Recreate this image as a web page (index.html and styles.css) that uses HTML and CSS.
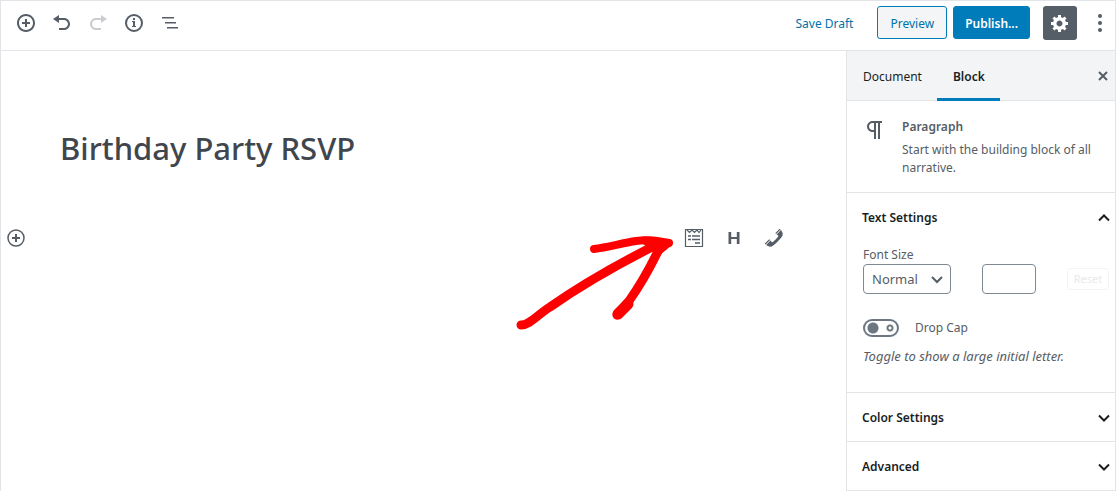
FILE: index.html
```html
<!DOCTYPE html>
<html lang="en">
<head>
    <meta charset="UTF-8">
    <meta name="viewport" content="width=device-width, initial-scale=1.0">
    <title>Edit Page</title>
    <link rel="stylesheet" href="styles.css">
</head>
<body>
    <header class="toolbar">
        <div class="toolbar-left">
            <button class="icon-btn" aria-label="Add block">
                <svg width="20" height="20" viewBox="0 0 20 20"><path d="M10 1c-5 0-9 4-9 9s4 9 9 9 9-4 9-9-4-9-9-9zm0 16c-3.900 0-7-3.100-7-7s3.100-7 7-7 7 3.100 7 7-3.100 7-7 7zm1-11H9v3H6v2h3v3h2v-3h3V9h-3V6z"/></svg>
            </button>
            <button class="icon-btn" aria-label="Undo">
                <svg width="20" height="20" viewBox="0 0 20 20"><path d="M12 5H7V2L1 6l6 4V7h5c2.200 0 4 1.800 4 4s-1.800 4-4 4H7v2h5c3.300 0 6-2.700 6-6s-2.700-6-6-6z"/></svg>
            </button>
            <button class="icon-btn" aria-label="Redo" disabled>
                <svg width="20" height="20" viewBox="0 0 20 20"><path d="M8 5h5V2l6 4-6 4V7H8c-2.200 0-4 1.800-4 4s1.800 4 4 4h5v2H8c-3.300 0-6-2.700-6-6s2.700-6 6-6z"/></svg>
            </button>
            <button class="icon-btn" aria-label="Content structure">
                <svg width="20" height="20" viewBox="0 0 20 20"><circle class="line" cx="10" cy="10" r="8" stroke-width="2"/><path d="M9 5h2v2H9zM8 8h3v5h1v1H8v-1h1V9H8z"/></svg>
            </button>
            <button class="icon-btn" aria-label="Block navigation">
                <svg width="20" height="20" viewBox="0 0 20 20"><path d="M2 4h12v1.500H2zM5 9h11v1.500H5zM7 14h11v1.500H7z"/></svg>
            </button>
        </div>
        <div class="toolbar-right">
            <button class="save-draft">Save Draft</button>
            <button class="btn btn-preview">Preview</button>
            <button class="btn btn-publish">Publish...</button>
            <button class="btn-settings" aria-label="Settings">
                <svg width="20" height="20" viewBox="0 0 20 20"><path d="M18 12h-2.180c-.17.7-.44 1.350-.81 1.930l1.540 1.540-2.100 2.100-1.540-1.540c-.58.36-1.230.63-1.910.79V19H8v-2.180c-.68-.16-1.330-.43-1.910-.79l-1.540 1.540-2.120-2.120 1.540-1.540c-.36-.58-.63-1.230-.79-1.910H1V9.030h2.170c.16-.7.44-1.350.8-1.940L2.430 5.550l2.100-2.100 1.540 1.540c.58-.37 1.240-.64 1.930-.81V2h3v2.180c.68.16 1.330.43 1.910.79l1.540-1.540 2.120 2.120-1.540 1.540c.36.59.64 1.240.8 1.940H18V12zm-8.500 1.500c1.660 0 3-1.340 3-3s-1.340-3-3-3-3 1.340-3 3 1.340 3 3 3z"/></svg>
            </button>
            <button class="btn-more" aria-label="More tools">
                <svg width="20" height="20" viewBox="0 0 20 20"><circle cx="10" cy="3" r="2"/><circle cx="10" cy="10" r="2"/><circle cx="10" cy="17" r="2"/></svg>
            </button>
        </div>
    </header>

    <div class="layout">
        <!-- Editor canvas -->
        <main class="editor">
            <input type="text" class="post-title" aria-label="Title" value="Birthday Party RSVP">
            <div class="block-row">
                <button class="inserter" aria-label="Add block">
                    <svg width="20" height="20" viewBox="0 0 20 20"><circle class="line" cx="10" cy="10" r="8" stroke-width="1.500"/><path d="M9 6h2v3h3v2h-3v3H9v-3H6V9h3z"/></svg>
                </button>
                <div class="quick-blocks">
                    <button class="quick-btn" aria-label="Form">
                        <svg class="line" width="20" height="20" viewBox="0 0 20 20"><path d="M1.500 1.500h17v17h-17z" stroke-width="1.200"/><path d="M3 2l2.500 2.500L8 2l2.500 2.500L13 2l2 2.500L17 2" stroke-width="1.200"/><path d="M4 8h3M8 8h8M4 11.500h3M8 11.500h8M11 15h5" stroke-width="1.400"/></svg>
                    </button>
                    <button class="quick-btn" aria-label="Heading">
                        <svg width="20" height="20" viewBox="0 0 20 20"><path d="M4.500 4h2.700v5h5.600V4h2.700v12h-2.700v-5H7.200v5H4.500z"/></svg>
                    </button>
                    <button class="quick-btn" aria-label="Phone">
                        <svg width="20" height="20" viewBox="0 0 20 20"><path d="M12.060 6l-.21-.2c-.52-.54-.43-.79.08-1.300l2.720-2.750c.81-.82.96-1.210 1.730-.48l.21.200zm.53.45l4.400-4.400c.7.94 2.340 3.470 1.530 5.340-.73 1.670-1.090 1.750-2 3-1.850 2.110-4.180 4.370-6 6.070-1.260.91-1.310 1.330-3 2-1.800.71-4.400-.89-5.380-1.560l4.400-4.400 1.180 1.620c.34.46 1.200-.06 1.800-.66 1.040-1.050 3.180-3.180 4-4.070.59-.59 1.120-1.450.66-1.800zM1.570 16.500l-.21-.21c-.68-.74-.29-.9.52-1.700l2.740-2.720c.51-.49.75-.6 1.270-.11l.2.210z"/></svg>
                    </button>
                </div>
                <!-- hand drawn arrow pointing at the form block -->
                <svg class="arrow" width="170" height="110" viewBox="0 0 170 110">
                    <path d="M11 100C20 100 27 90 40 82C70 61 106 40 148 19" stroke-width="9"/>
                    <path d="M84 24C99 22 112 18 126 16C139 14 146 16 159 18" stroke-width="8"/>
                    <path d="M150 22C141 41 131 59 119 76L107 90" stroke-width="9"/>
                    <path d="M118 79L108 89" stroke-width="11"/>
                    <path d="M134 15L159 18L148 27Z" stroke-width="7" fill="#f00"/>
                </svg>
            </div>
        </main>

        <!-- Settings sidebar -->
        <aside class="sidebar">
            <div class="tabs">
                <button class="tab">Document</button>
                <button class="tab active">Block</button>
                <button class="close" aria-label="Close settings">
                    <svg class="line" width="12" height="12" viewBox="0 0 12 12"><path d="M2 2l8 8M10 2l-8 8"/></svg>
                </button>
            </div>

            <section class="block-card">
                <svg width="24" height="24" viewBox="0 0 24 24"><path d="M11 5v7H9.500C7.600 12 6 10.400 6 8.500S7.600 5 9.500 5H11m8-2H9.500C6.500 3 4 5.500 4 8.500S6.500 14 9.500 14H11v7h2V5h2v16h2V5h2V3z"/></svg>
                <div>
                    <h2>Paragraph</h2>
                    <p>Start with the building block of all narrative.</p>
                </div>
            </section>

            <section class="panel">
                <button class="panel-title" aria-expanded="true">
                    Text Settings
                    <svg class="line" width="14" height="14" viewBox="0 0 14 14"><path d="M2 9.500l5-5 5 5"/></svg>
                </button>
                <div class="panel-body">
                    <label class="field-label" for="font-size">Font Size</label>
                    <div class="size-row">
                        <div class="select-wrap">
                            <select id="font-size">
                                <option>Normal</option>
                            </select>
                            <svg class="line" width="12" height="12" viewBox="0 0 12 12"><path d="M1 4l5 5 5-5"/></svg>
                        </div>
                        <input type="text" class="size-input" aria-label="Custom font size">
                        <button class="reset" disabled>Reset</button>
                    </div>
                    <div class="toggle-row">
                        <input type="checkbox" class="toggle" id="drop-cap">
                        <label for="drop-cap">Drop Cap</label>
                    </div>
                    <p class="help">Toggle to show a large initial letter.</p>
                </div>
            </section>

            <section class="panel">
                <button class="panel-title" aria-expanded="false">
                    Color Settings
                    <svg class="line" width="14" height="14" viewBox="0 0 14 14"><path d="M2 4.500l5 5 5-5"/></svg>
                </button>
            </section>
            <section class="panel">
                <button class="panel-title" aria-expanded="false">
                    Advanced
                    <svg class="line" width="14" height="14" viewBox="0 0 14 14"><path d="M2 4.500l5 5 5-5"/></svg>
                </button>
            </section>
        </aside>
    </div>
</body>
</html>
```
FILE: styles.css
```css
* {
    box-sizing: border-box;
}

body {
    margin: 0;
    min-height: 100vh;
    display: flex;
    flex-direction: column;
    border: 1px solid #e2e4e7;
    background: #fff;
    color: #555d66;
    font-family: "Noto Sans", "Open Sans", sans-serif;
    font-size: 12px;
    line-height: 18px;
}

button, input, select {
    font: inherit;
    color: inherit;
}

button {
    display: flex;
    align-items: center;
    justify-content: center;
    padding: 0;
    border: none;
    background: none;
    cursor: pointer;
}

svg {
    display: block;
    flex: none;
    fill: currentColor;
}

.line {
    fill: none;
    stroke: currentColor;
}

/* Top toolbar */
.toolbar {
    display: flex;
    align-items: center;
    justify-content: space-between;
    height: 50px;
    padding: 0 5px 6px 7px;
    border-bottom: 1px solid #e2e4e7;
}

.toolbar-left, .toolbar-right {
    display: flex;
    align-items: center;
}

.icon-btn {
    width: 36px;
    height: 36px;
}

.icon-btn:disabled {
    opacity: 0.3;
}

.save-draft {
    margin-right: 24px;
    padding-top: 2px;
    color: #0073aa;
}

.btn {
    height: 33px;
    margin-right: 6px;
    padding: 2px 12px 0;
    border: 1px solid #007cba;
    border-radius: 3px;
}

.btn-preview {
    background: #f3f5f6;
    color: #0073aa;
}

.btn-publish {
    margin-right: 13px;
    padding: 2px 11px 0;
    background: #007cba;
    color: #fff;
    font-weight: 600;
}

.btn-settings {
    width: 34px;
    height: 34px;
    border-radius: 3px;
    background: #555d66;
    color: #fff;
}

.btn-more {
    width: 20px;
    height: 34px;
    margin-left: 13px;
}

.layout {
    display: flex;
    flex: 1;
}

/* Editor */
.editor {
    flex: 1;
    min-width: 0;
    padding-top: 73px;
}

.post-title {
    display: block;
    width: 100%;
    height: 48px;
    padding: 0 59px;
    border: none;
    outline: none;
    color: #40464d;
    font-size: 31px;
    font-weight: 500;
}

.block-row {
    position: relative;
    display: flex;
    align-items: center;
    justify-content: space-between;
    margin-top: 46px;
    padding: 0 52px 0 5px;
}

.quick-blocks {
    display: flex;
}

.quick-btn {
    width: 40px;
    height: 40px;
}

.arrow {
    position: absolute;
    right: 166px;
    top: 7px;
    fill: none;
    stroke: #f00;
    stroke-linecap: round;
    stroke-linejoin: round;
    pointer-events: none;
}

/* Sidebar */
.sidebar {
    width: 269px;
    border-left: 1px solid #e2e4e7;
}

.tabs {
    display: flex;
    height: 50px;
    background: #f3f4f5;
    border-bottom: 1px solid #e2e4e7;
}

.tab {
    height: 50px;
    padding: 2px 15px 0 16px;
    color: #191e23;
}

.tab.active {
    box-shadow: inset 0 -3px #007cba;
    font-weight: 600;
}

.close {
    width: 24px;
    margin-left: auto;
}

.close svg, .panel-title svg, .select-wrap svg {
    stroke-width: 2;
}

.block-card {
    display: flex;
    gap: 15px;
    height: 92px;
    padding: 17px 16px;
    border-bottom: 1px solid #e2e4e7;
}

.block-card h2 {
    margin: 0 0 5px;
    font-size: 12px;
    font-weight: 600;
}

.block-card p {
    margin: 0;
}

.panel {
    border-bottom: 1px solid #e2e4e7;
}

.panel-title {
    justify-content: space-between;
    width: 100%;
    height: 48px;
    padding: 2px 4px 0 15px;
    color: #191e23;
    font-weight: 600;
}

.panel-body {
    padding: 5px 6px 27px 16px;
}

.field-label {
    display: block;
}

.size-row {
    display: flex;
    align-items: center;
    justify-content: space-between;
}

.select-wrap {
    position: relative;
}

.select-wrap select {
    appearance: none;
    display: block;
    width: 88px;
    height: 30px;
    padding: 0 8px;
    border: 1px solid #7e8993;
    border-radius: 4px;
    background: #fff;
    font-size: 13px;
}

.select-wrap svg {
    position: absolute;
    right: 8px;
    top: 9px;
    pointer-events: none;
}

.size-input {
    width: 54px;
    height: 30px;
    border: 1px solid #7e8993;
    border-radius: 4px;
}

.reset {
    width: 42px;
    height: 22px;
    border: 1px solid #f3f4f5;
    border-radius: 3px;
    color: #e8eaeb;
    font-size: 11px;
}

.toggle-row {
    display: flex;
    align-items: center;
    gap: 16px;
    margin-top: 25px;
}

.toggle {
    appearance: none;
    width: 36px;
    height: 18px;
    margin: 0;
    border: 2px solid #6c7781;
    border-radius: 9px;
    background:
        radial-gradient(circle at 8px 7px, #6c7781 5px, transparent 6px),
        radial-gradient(circle at 25px 7px, transparent 1px, #6c7781 2px, #6c7781 3px, transparent 4px);
}

.help {
    margin: 10px 0 0;
    font-size: 13px;
    font-style: italic;
}
```
